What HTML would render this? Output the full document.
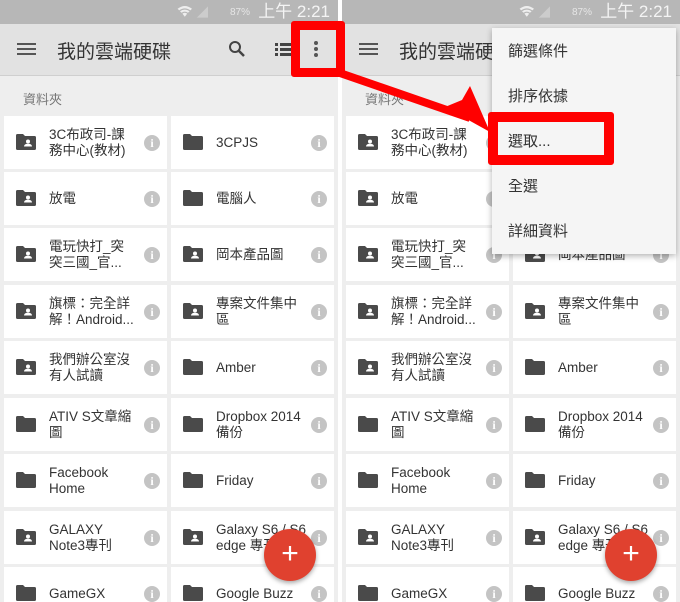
<!DOCTYPE html>
<html><head><meta charset="utf-8"><style>
*{margin:0;padding:0;box-sizing:border-box}
body{width:680px;height:602px;position:relative;overflow:hidden;background:#fff;font-family:"Liberation Sans","Noto Sans CJK TC",sans-serif}
.p{position:absolute;top:0;width:338px;height:602px;background:#eeeeee;overflow:hidden}
.sb{position:absolute;left:0;top:0;width:100%;height:24px;background:#b7b7b7;color:#eee}
.sb .t{position:absolute;right:8px;top:2px;font-size:17px;line-height:20px;color:#f4f4f4}
.sb .b{position:absolute;right:88px;top:7px;font-size:10px;line-height:12px;color:#e6e6e6}
.tb{position:absolute;left:0;top:24px;width:100%;height:52px;background:#e2e2e2;border-bottom:1px solid #cfcfcf}
.ham{position:absolute;left:17px;top:19px;width:19px;height:2px;background:#555;box-shadow:0 5px 0 #555,0 10px 0 #555}
.ttl{position:absolute;left:57px;top:13px;font-size:19px;color:#333}
.sec{position:absolute;left:23px;top:89px;font-size:13px;color:#777}
.c{position:absolute;width:163px;height:53px;background:#fff}
.c .n{position:absolute;left:45px;top:0;height:53px;width:90px;display:flex;align-items:center;font-size:13.5px;line-height:16px;color:#333;white-space:nowrap;overflow:hidden}
.c svg.f{position:absolute;left:12px;top:18px}
.c .i{position:absolute;left:140px;top:19px;width:16px;height:16px;border-radius:50%;background:#c4c4c4;color:#fff;font-size:12px;font-weight:bold;text-align:center;line-height:16px;font-family:"Liberation Serif",serif}
.fab{position:absolute;width:52px;height:52px;border-radius:50%;background:#e0412f;box-shadow:0 2px 5px rgba(0,0,0,.35);color:#fff;font-size:30px;text-align:center;line-height:50px}
.menu{position:absolute;left:492px;top:28px;width:184px;height:226px;background:#f5f5f5;box-shadow:0 2px 6px rgba(0,0,0,.3)}
.menu div{position:absolute;left:16px;font-size:15px;color:#333}
</style></head><body>
<svg width="0" height="0" style="position:absolute"><defs>
<symbol id="fp" viewBox="0 0 20 16"><path d="M0 1.5Q0 0 1.5 0H7l2 2h9.5Q20 2 20 3.5v11Q20 16 18.5 16h-17Q0 16 0 14.5z" fill="#4a4a4a"/></symbol>
<symbol id="fs" viewBox="0 0 20 16"><path d="M0 1.5Q0 0 1.5 0H7l2 2h9.5Q20 2 20 3.5v11Q20 16 18.5 16h-17Q0 16 0 14.5z" fill="#4a4a4a"/><circle cx="12" cy="7.5" r="2" fill="#fff"/><path d="M8 12.5q0-2.8 4-2.8t4 2.8z" fill="#fff"/></symbol>
<symbol id="st" viewBox="0 0 60 20"><path d="M2 6q9-7 18 0l-2 2q-7-5-14 0zM5 9q6-4 12 0l-2 2q-4-3-8 0zM8 12q3-2 6 0l-3 4z" fill="#eee"/><path d="M26 17L40 3v14z" fill="#ccc"/></symbol>
</defs></svg>

<!-- LEFT PANEL -->
<div class="p" style="left:0">
<div class="sb"><svg style="position:absolute;left:176px;top:3px" width="48" height="18"><use href="#st"/></svg><span class="b">87%</span><span class="t">上午 2:21</span></div>
<div class="tb"><div class="ham"></div><div class="ttl">我的雲端硬碟</div>
<svg style="position:absolute;left:228px;top:16px" width="18" height="18" viewBox="0 0 18 18"><circle cx="7" cy="7" r="5" fill="none" stroke="#444" stroke-width="2"/><path d="M11 11l5 5" stroke="#444" stroke-width="2.5"/></svg>
<svg style="position:absolute;left:275px;top:19px" width="18" height="13" viewBox="0 0 18 13"><path d="M0 0h3v3H0zM5 0h13v3H5zM0 5h3v3H0zM5 5h13v3H5zM0 10h3v3H0zM5 10h13v3H5z" fill="#444"/></svg>
</div>
<div class="sec">資料夾</div>
<div class="c" style="left:4px;top:116px"><svg class="f" width="20" height="16"><use href="#fs"/></svg><div class="n">3C布政司-課<br>務中心(教材)</div><div class="i">i</div></div>
<div class="c" style="left:171px;top:116px"><svg class="f" width="20" height="16"><use href="#fp"/></svg><div class="n">3CPJS</div><div class="i">i</div></div>
<div class="c" style="left:4px;top:172px"><svg class="f" width="20" height="16"><use href="#fs"/></svg><div class="n">放電</div><div class="i">i</div></div>
<div class="c" style="left:171px;top:172px"><svg class="f" width="20" height="16"><use href="#fp"/></svg><div class="n">電腦人</div><div class="i">i</div></div>
<div class="c" style="left:4px;top:228px"><svg class="f" width="20" height="16"><use href="#fs"/></svg><div class="n">電玩快打_突<br>突三國_官...</div><div class="i">i</div></div>
<div class="c" style="left:171px;top:228px"><svg class="f" width="20" height="16"><use href="#fs"/></svg><div class="n">岡本產品圖</div><div class="i">i</div></div>
<div class="c" style="left:4px;top:285px"><svg class="f" width="20" height="16"><use href="#fs"/></svg><div class="n">旗標：完全詳<br>解！Android...</div><div class="i">i</div></div>
<div class="c" style="left:171px;top:285px"><svg class="f" width="20" height="16"><use href="#fs"/></svg><div class="n">專案文件集中<br>區</div><div class="i">i</div></div>
<div class="c" style="left:4px;top:341px"><svg class="f" width="20" height="16"><use href="#fs"/></svg><div class="n">我們辦公室沒<br>有人試讀</div><div class="i">i</div></div>
<div class="c" style="left:171px;top:341px"><svg class="f" width="20" height="16"><use href="#fp"/></svg><div class="n">Amber</div><div class="i">i</div></div>
<div class="c" style="left:4px;top:398px"><svg class="f" width="20" height="16"><use href="#fp"/></svg><div class="n">ATIV S文章縮<br>圖</div><div class="i">i</div></div>
<div class="c" style="left:171px;top:398px"><svg class="f" width="20" height="16"><use href="#fp"/></svg><div class="n">Dropbox 2014<br>備份</div><div class="i">i</div></div>
<div class="c" style="left:4px;top:454px"><svg class="f" width="20" height="16"><use href="#fp"/></svg><div class="n">Facebook<br>Home</div><div class="i">i</div></div>
<div class="c" style="left:171px;top:454px"><svg class="f" width="20" height="16"><use href="#fp"/></svg><div class="n">Friday</div><div class="i">i</div></div>
<div class="c" style="left:4px;top:511px"><svg class="f" width="20" height="16"><use href="#fs"/></svg><div class="n">GALAXY<br>Note3專刊</div><div class="i">i</div></div>
<div class="c" style="left:171px;top:511px"><svg class="f" width="20" height="16"><use href="#fs"/></svg><div class="n">Galaxy S6 / S6<br>edge 專刊</div><div class="i">i</div></div>
<div class="c" style="left:4px;top:567px"><svg class="f" width="20" height="16"><use href="#fp"/></svg><div class="n">GameGX</div><div class="i">i</div></div>
<div class="c" style="left:171px;top:567px"><svg class="f" width="20" height="16"><use href="#fp"/></svg><div class="n">Google Buzz</div><div class="i">i</div></div>
<div class="fab" style="left:264px;top:529px">+</div>
</div>

<!-- RIGHT PANEL -->
<div class="p" style="left:342px">
<div class="sb"><svg style="position:absolute;left:176px;top:3px" width="48" height="18"><use href="#st"/></svg><span class="b">87%</span><span class="t">上午 2:21</span></div>
<div class="tb"><div class="ham"></div><div class="ttl">我的雲端硬碟</div></div>
<div class="sec">資料夾</div>
<div class="c" style="left:4px;top:116px"><svg class="f" width="20" height="16"><use href="#fs"/></svg><div class="n">3C布政司-課<br>務中心(教材)</div><div class="i">i</div></div>
<div class="c" style="left:171px;top:116px"><svg class="f" width="20" height="16"><use href="#fp"/></svg><div class="n">3CPJS</div><div class="i">i</div></div>
<div class="c" style="left:4px;top:172px"><svg class="f" width="20" height="16"><use href="#fs"/></svg><div class="n">放電</div><div class="i">i</div></div>
<div class="c" style="left:171px;top:172px"><svg class="f" width="20" height="16"><use href="#fp"/></svg><div class="n">電腦人</div><div class="i">i</div></div>
<div class="c" style="left:4px;top:228px"><svg class="f" width="20" height="16"><use href="#fs"/></svg><div class="n">電玩快打_突<br>突三國_官...</div><div class="i">i</div></div>
<div class="c" style="left:171px;top:228px"><svg class="f" width="20" height="16"><use href="#fs"/></svg><div class="n">岡本產品圖</div><div class="i">i</div></div>
<div class="c" style="left:4px;top:285px"><svg class="f" width="20" height="16"><use href="#fs"/></svg><div class="n">旗標：完全詳<br>解！Android...</div><div class="i">i</div></div>
<div class="c" style="left:171px;top:285px"><svg class="f" width="20" height="16"><use href="#fs"/></svg><div class="n">專案文件集中<br>區</div><div class="i">i</div></div>
<div class="c" style="left:4px;top:341px"><svg class="f" width="20" height="16"><use href="#fs"/></svg><div class="n">我們辦公室沒<br>有人試讀</div><div class="i">i</div></div>
<div class="c" style="left:171px;top:341px"><svg class="f" width="20" height="16"><use href="#fp"/></svg><div class="n">Amber</div><div class="i">i</div></div>
<div class="c" style="left:4px;top:398px"><svg class="f" width="20" height="16"><use href="#fp"/></svg><div class="n">ATIV S文章縮<br>圖</div><div class="i">i</div></div>
<div class="c" style="left:171px;top:398px"><svg class="f" width="20" height="16"><use href="#fp"/></svg><div class="n">Dropbox 2014<br>備份</div><div class="i">i</div></div>
<div class="c" style="left:4px;top:454px"><svg class="f" width="20" height="16"><use href="#fp"/></svg><div class="n">Facebook<br>Home</div><div class="i">i</div></div>
<div class="c" style="left:171px;top:454px"><svg class="f" width="20" height="16"><use href="#fp"/></svg><div class="n">Friday</div><div class="i">i</div></div>
<div class="c" style="left:4px;top:511px"><svg class="f" width="20" height="16"><use href="#fs"/></svg><div class="n">GALAXY<br>Note3專刊</div><div class="i">i</div></div>
<div class="c" style="left:171px;top:511px"><svg class="f" width="20" height="16"><use href="#fs"/></svg><div class="n">Galaxy S6 / S6<br>edge 專刊</div><div class="i">i</div></div>
<div class="c" style="left:4px;top:567px"><svg class="f" width="20" height="16"><use href="#fp"/></svg><div class="n">GameGX</div><div class="i">i</div></div>
<div class="c" style="left:171px;top:567px"><svg class="f" width="20" height="16"><use href="#fp"/></svg><div class="n">Google Buzz</div><div class="i">i</div></div>
<div class="fab" style="left:263px;top:529px">+</div>
</div>

<div class="menu">
<div style="top:12px">篩選條件</div>
<div style="top:57px">排序依據</div>
<div style="top:102px">選取...</div>
<div style="top:147px">全選</div>
<div style="top:192px">詳細資料</div>
</div>

<!-- left red box with dots -->
<div style="position:absolute;left:291px;top:21px;width:54px;height:56px;border:9px solid #f00;border-radius:3px;background:#e2e2e2"></div>
<svg style="position:absolute;left:313px;top:40px" width="6" height="18" viewBox="0 0 6 18"><circle cx="3" cy="3" r="2" fill="#555"/><circle cx="3" cy="9" r="2" fill="#555"/><circle cx="3" cy="15" r="2" fill="#555"/></svg>
<!-- arrow -->
<svg style="position:absolute;left:0;top:0" width="680" height="602"><path d="M337 72 L470 118" stroke="#f00" stroke-width="8"/><path d="M490 132 L445 107 L462 100 L470 86 Z" fill="#f00"/></svg>
<!-- right red box -->
<div style="position:absolute;left:488px;top:112px;width:126px;height:53px;border:10px solid #f00;border-radius:3px"></div>
</body></html>
